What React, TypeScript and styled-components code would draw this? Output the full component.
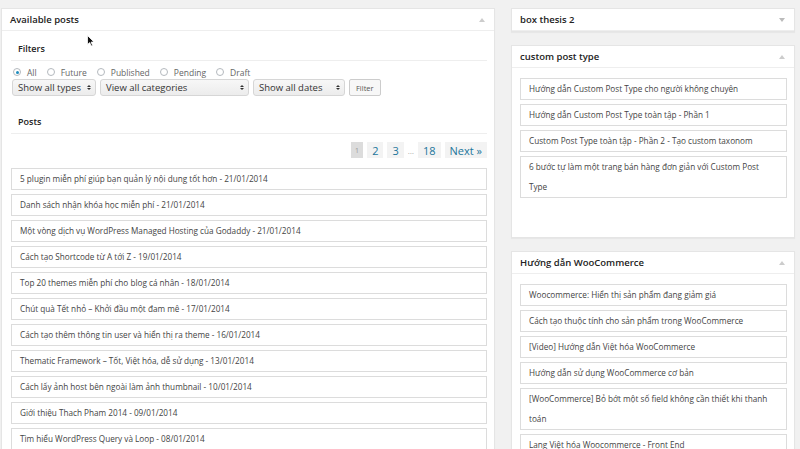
import React from "react";
import styled, { createGlobalStyle } from "styled-components";

const Global = createGlobalStyle`
  html, body { margin: 0; padding: 0; background: #f1f1f1; }
  body { font-family: "Open Sans", "Noto Sans", sans-serif; color: #444; }
`;

const Page = styled.div`
  position: relative;
  height: 449px;
  overflow: hidden;
  display: grid;
  grid-template-columns: 494px 284px;
  column-gap: 16px;
  padding: 8px 5px 0 1px;
  box-sizing: border-box;
  align-items: start;
`;

const Panel = styled.section`
  background: #fff;
  border: 1px solid #e5e5e5;
  box-shadow: 0 1px 1px rgba(0, 0, 0, 0.04);
  box-sizing: border-box;
`;

const Column = styled.div`
  display: flex;
  flex-direction: column;
  gap: 13px;
`;

const PanelHeader = styled.header`
  height: 21px;
  display: flex;
  align-items: center;
  justify-content: space-between;
  padding: 0 9px 0 8px;
  border-bottom: 1px solid #eee;
  font-size: 9.5px;
  font-weight: 600;
  color: #222;
`;

const Toggle = styled.span<{ $down?: boolean }>`
  width: 0;
  height: 0;
  border-left: 3px solid transparent;
  border-right: 3px solid transparent;
  ${(p) =>
    p.$down
      ? "border-top: 4px solid #bbb;"
      : "border-bottom: 4px solid #ccc;"}
`;

const LeftBody = styled.div`
  padding: 0 7px 0 9px;
`;

const Section = styled.h4<{ $h: number }>`
  margin: 0;
  height: ${(p) => p.$h}px;
  display: flex;
  align-items: flex-end;
  padding: 0 0 5px 7px;
  font-size: 9px;
  line-height: 12px;
  font-weight: 600;
  color: #222;
  border-bottom: 1px solid #eee;
  box-sizing: content-box;
`;

const RadioRow = styled.div`
  display: flex;
  align-items: center;
  gap: 10px;
  height: 12px;
  margin-top: 5px;
  padding-left: 2px;
  font-size: 8.5px;
  color: #666;
`;

const RadioLabel = styled.label`
  display: flex;
  align-items: center;
  gap: 6px;
`;

const RadioDot = styled.span<{ $on?: boolean }>`
  width: 8px;
  height: 8px;
  border-radius: 50%;
  border: 1px solid #b4b9be;
  box-sizing: border-box;
  background: #fff;
  display: flex;
  align-items: center;
  justify-content: center;
  &::after {
    content: "";
    width: 3px;
    height: 3px;
    border-radius: 50%;
    background: ${(p) => (p.$on ? "#1e8cbe" : "transparent")};
  }
`;

const SelectRow = styled.div`
  display: flex;
  align-items: center;
  gap: 4px;
  margin-top: 1px;
  padding-left: 1px;
`;

const Select = styled.div<{ $w: number }>`
  width: ${(p) => p.$w}px;
  height: 17px;
  box-sizing: border-box;
  border: 1px solid #d6d6d6;
  border-radius: 3px;
  background: linear-gradient(#f7f7f7, #ececec);
  display: flex;
  align-items: center;
  justify-content: space-between;
  padding: 0 4px 0 5px;
  font-size: 9.5px;
  color: #333;
`;

const Arrows = styled.span`
  display: flex;
  flex-direction: column;
  gap: 1px;
  &::before, &::after {
    content: "";
    border-left: 2px solid transparent;
    border-right: 2px solid transparent;
  }
  &::before { border-bottom: 2.5px solid #333; }
  &::after { border-top: 2.5px solid #333; }
`;

const Button = styled.button`
  height: 17px;
  padding: 0 6px;
  border: 1px solid #ccc;
  border-radius: 2px;
  background: #f7f7f7;
  font-family: inherit;
  font-size: 7.5px;
  color: #555;
`;

const Pager = styled.nav`
  display: flex;
  justify-content: flex-end;
  align-items: center;
  gap: 4px;
  margin-top: 8px;
  height: 16px;
`;

const PageLink = styled.span<{ $current?: boolean }>`
  height: 16px;
  display: flex;
  align-items: center;
  padding: 0 ${(p) => (p.$current ? 4 : 5)}px;
  background: ${(p) => (p.$current ? "#dcdcdc" : "#f3f3f3")};
  color: ${(p) => (p.$current ? "#999" : "#21759b")};
  font-size: ${(p) => (p.$current ? 7 : 11)}px;
`;

const Dots = styled.span`
  color: #aaa;
  font-size: 8px;
  align-self: center;
`;

const List = styled.ul`
  list-style: none;
  margin: 10px 0 0;
  padding: 0;
  display: flex;
  flex-direction: column;
  gap: 4px;
`;

const Item = styled.li`
  border: 1px solid #dcdcdc;
  background: #fff;
  line-height: 20px;
  padding: 0 8px;
  font-size: 8.2px;
  color: #444;
`;

const RightBody = styled.div<{ $pad?: number }>`
  padding: 10px 7px ${(p) => p.$pad ?? 39}px 8px;
`;

const RightList = styled(List)`
  margin: 0;
`;

const Cursor = styled.svg`
  position: absolute;
  left: 87px;
  top: 35px;
`;

const posts = [
  "5 plugin miễn phí giúp bạn quản lý nội dung tốt hơn - 21/01/2014",
  "Danh sách nhận khóa học miễn phí - 21/01/2014",
  "Một vòng dịch vụ WordPress Managed Hosting của Godaddy - 21/01/2014",
  "Cách tạo Shortcode từ A tới Z - 19/01/2014",
  "Top 20 themes miễn phí cho blog cá nhân - 18/01/2014",
  "Chút quà Tết nhỏ – Khởi đầu một đam mê - 17/01/2014",
  "Cách tạo thêm thông tin user và hiển thị ra theme - 16/01/2014",
  "Thematic Framework – Tốt, Việt hóa, dễ sử dụng - 13/01/2014",
  "Cách lấy ảnh host bên ngoài làm ảnh thumbnail - 10/01/2014",
  "Giới thiệu Thach Pham 2014 - 09/01/2014",
  "Tìm hiểu WordPress Query và Loop - 08/01/2014",
];

const cpt = [
  "Hướng dẫn Custom Post Type cho người không chuyên",
  "Hướng dẫn Custom Post Type toàn tập - Phần 1",
  "Custom Post Type toàn tập - Phần 2 - Tạo custom taxonom",
  "6 bước tự làm một trang bán hàng đơn giản với Custom Post Type",
];

const woo = [
  "Woocommerce: Hiển thị sản phẩm đang giảm giá",
  "Cách tạo thuộc tính cho sản phẩm trong WooCommerce",
  "[Video] Hướng dẫn Việt hóa WooCommerce",
  "Hướng dẫn sử dụng WooCommerce cơ bản",
  "[WooCommerce] Bỏ bớt một số field không cần thiết khi thanh toán",
  "Lang Việt hóa Woocommerce - Front End",
];

const radios = ["All", "Future", "Published", "Pending", "Draft"];

export default function App() {
  return (
    <>
      <Global />
      <Page>
        <Panel>
          <PanelHeader>
            <span>Available posts</span>
            <Toggle />
          </PanelHeader>
          <LeftBody>
            <Section $h={24}>Filters</Section>
            <RadioRow>
              {radios.map((r, i) => (
                <RadioLabel key={r}>
                  <RadioDot $on={i === 0} />
                  {r}
                </RadioLabel>
              ))}
            </RadioRow>
            <SelectRow>
              <Select $w={84}>
                Show all types <Arrows />
              </Select>
              <Select $w={149}>
                View all categories <Arrows />
              </Select>
              <Select $w={92}>
                Show all dates <Arrows />
              </Select>
              <Button>Filter</Button>
            </SelectRow>
            <Section $h={32}>Posts</Section>
            <Pager>
              <PageLink $current>1</PageLink>
              <PageLink>2</PageLink>
              <PageLink>3</PageLink>
              <Dots>…</Dots>
              <PageLink>18</PageLink>
              <PageLink>Next »</PageLink>
            </Pager>
            <List>
              {posts.map((p) => (
                <Item key={p}>{p}</Item>
              ))}
            </List>
          </LeftBody>
        </Panel>
        <Column>
          <Panel>
            <PanelHeader>
              <span>box thesis 2</span>
              <Toggle $down />
            </PanelHeader>
          </Panel>
          <Panel>
            <PanelHeader>
              <span>custom post type</span>
              <Toggle />
            </PanelHeader>
            <RightBody>
              <RightList>
                {cpt.map((p) => (
                  <Item key={p}>{p}</Item>
                ))}
              </RightList>
            </RightBody>
          </Panel>
          <Panel>
            <PanelHeader>
              <span>Hướng dẫn WooCommerce</span>
              <Toggle />
            </PanelHeader>
            <RightBody $pad={20}>
              <RightList>
                {woo.map((p) => (
                  <Item key={p}>{p}</Item>
                ))}
              </RightList>
            </RightBody>
          </Panel>
        </Column>
        <Cursor width="8" height="12" viewBox="0 0 8 12">
          <path d="M0.5 0.5 L0.5 9.5 L2.7 7.6 L4.2 11 L5.6 10.4 L4.1 7.1 L7 7 Z" fill="#111" stroke="#fff" strokeWidth="0.8" />
        </Cursor>
      </Page>
    </>
  );
}
